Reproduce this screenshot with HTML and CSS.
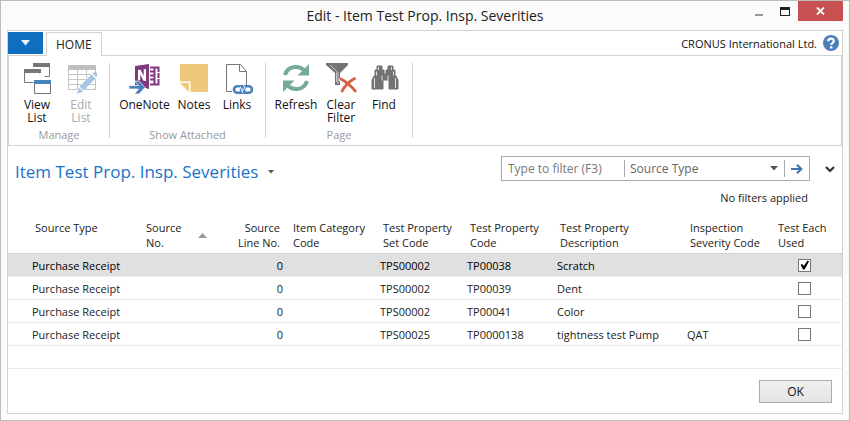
FILE: index.html
```html
<!DOCTYPE html>
<html lang="en">
<head>
<meta charset="utf-8">
<title>Edit - Item Test Prop. Insp. Severities</title>
<link rel="stylesheet" href="styles.css">
</head>
<body>
<div class="window">
  <header class="titlebar">
    <div class="window-title">Edit - Item Test Prop. Insp. Severities</div>
    <div class="window-controls">
      <button class="window-button" aria-label="Minimize"><svg width="11" height="11" viewBox="0 0 11 11"><path d="M1 8h8v2H1z" fill="#999"/></svg></button>
      <button class="window-button" aria-label="Maximize"><svg width="11" height="11" viewBox="0 0 11 11"><path d="M0 1h10v9H0zM1 4v5h8V4z" fill="#222" fill-rule="evenodd"/></svg></button>
      <button class="window-button close" aria-label="Close"><svg width="9" height="8" viewBox="0 0 9 8"><path d="M1 .5l7 7M8 .5l-7 7" stroke="#fff" stroke-width="1.8"/></svg></button>
    </div>
  </header>

  <main class="frame">
    <nav class="tabs">
      <button class="app-menu" aria-label="Application menu"><svg width="9" height="6" viewBox="0 0 9 6"><path d="M0 0h9L4.500 5.500z" fill="#e8f2fb"/></svg></button>
      <button class="tab">HOME</button>
      <span class="company">CRONUS International Ltd.</span>
      <button class="help" aria-label="Help"><svg width="16" height="16" viewBox="0 0 16 16"><circle cx="8" cy="8" r="8" fill="#4a7fb8"/><path d="M5.200 6.200C5.200 2.700 10.800 2.800 10.800 5.900C10.800 7.800 8.200 7.800 8.200 10" fill="none" stroke="#fff" stroke-width="2.200"/><path d="M7 11.200h2.400v2.300H7z" fill="#fff"/></svg></button>
    </nav>

    <section class="ribbon">
      <div class="group">
        <div class="actions">
          <button class="action"><svg width="32" height="32" viewBox="0 0 32 32"><g fill="none" stroke="#777"><path d="M12.500 4V1.500h16v12h-5M3.500 8v11.500h9M18.500 10.500V8"/></g><path d="M12 0h17v4H12zM3 6h17v4H3z" fill="#777"/><path d="M13.500 18v12.500h16V18" fill="#fff" stroke="#777"/><path d="M13 17h17v4H13z" fill="#4682bd"/></svg><span>View<br>List</span></button>
          <button class="action" disabled><svg width="32" height="32" viewBox="0 0 32 32"><path d="M3.500 5v21.500h27V5M3 11.500h28M3 16.500h28M3 21.500h28M12.500 7v19M21.500 7v19" fill="none" stroke="#c4c4c4"/><path d="M3 2h28v5H3z" fill="#bfbfbf"/><path d="M11 32l2.500-8L28 9.500l4.500 4.500L18 28.500z" fill="#fff"/><path d="M12 31l2-6.500 4 4zM14.500 23.500l12-12 4 4-12 12zM27.500 10.500l1-1q2-1 3.200.3t.3 3.200l-.8 1z" fill="#a6c4e3"/></svg><span>Edit<br>List</span></button>
        </div>
        <div class="group-label">Manage</div>
      </div>
      <div class="separator"></div>
      <div class="group">
        <div class="actions">
          <button class="action wide"><svg width="32" height="32" viewBox="0 0 32 32"><path d="M6 3l14-2v25L6 22z" fill="#80397b"/><path d="M9 17V7l2.500-.3 3.200 6.300V6.200l2.300-.3v12l-2.500-.2-3.200-6.200v5.700z" fill="#fff"/><path d="M21 4.500h8.500v17H21M21 8.500h5M21 12.500h5M21 16.500h5M25.500 4v17" fill="none" stroke="#80397b" stroke-width="2"/><path d="M27 9.500h4M27 15.500h4" stroke="#fff"/><path d="M0 22.500h9.500l-4-4.500H10l6 6.500-6 6.500H5.500l4-5H0z" fill="#4682bd" stroke="#fff" stroke-width=".7"/></svg><span>OneNote</span></button>
          <button class="action narrow"><svg width="32" height="32" viewBox="0 0 32 32"><path d="M2 1h28v28H12.500V18.500H2z" fill="#efc77d"/><path d="M2 20h9v9z" fill="#efc77d"/></svg><span>Notes</span></button>
          <button class="action"><svg width="32" height="32" viewBox="0 0 32 32"><path d="M11 28.500H5.500v-27h14l6 7V22M18.500 1.500V8.500h7" fill="none" stroke="#777"/><g fill="none" stroke="#4682bd" stroke-width="2.600"><rect x="13" y="23.300" width="11" height="6.500" rx="3.250"/><rect x="20" y="23.300" width="11" height="6.500" rx="3.250"/></g><path d="M19 23.500l3 6.500M22.500 22l2.500 6" stroke="#fff"/></svg><span>Links</span></button>
        </div>
        <div class="group-label">Show Attached</div>
      </div>
      <div class="separator"></div>
      <div class="group">
        <div class="actions">
          <button class="action mid"><svg width="32" height="32" viewBox="0 0 32 32"><g fill="none" stroke="#75ab97" stroke-width="4"><path d="M5 12C8 2 20 2 25 8.500"/><path d="M27 18C24 28 12 28 7 21.500"/></g><path d="M29 1v11.500H17.500zM3 29V17.500h11.500z" fill="#75ab97"/></svg><span>Refresh</span></button>
          <button class="action narrow"><svg width="32" height="32" viewBox="0 0 32 32"><path d="M1 0h22v2l-8 8v12h-5V10L1 2z" fill="#737373"/><path d="M11.500 9.500v9l1.500 2v-11L5 2" fill="none" stroke="#ddd" stroke-width=".8"/><path d="M14.500 15.500Q24 20 31 29M29.500 15Q20 20 16.500 29" fill="none" stroke="#fff" stroke-width="4.500"/><path d="M15 15.500Q24 20 31 29M30.500 15Q21 20 16.500 29" fill="none" stroke="#d95f43" stroke-width="2.800"/></svg><span>Clear<br>Filter</span></button>
          <button class="action"><svg width="32" height="32" viewBox="0 0 32 32"><path d="M9 3h5v4h2v4h2V7h2V3h5v4h2v6h1l2 4v9h-9v-9h-6v9H4v-9l2-4h1V7h2z" fill="#737373" stroke="#737373"/><path d="M10.500 4v3M8.500 8.500v4M6.500 15v10M23.500 4v3M25.500 8.500v4M27.500 15v10M14 12.500v5M20 12.500v5" stroke="#fff" stroke-width=".8"/></svg><span>Find</span></button>
        </div>
        <div class="group-label">Page</div>
      </div>
      <div class="separator"></div>
    </section>

    <section class="page-head">
      <h1><a href="#">Item Test Prop. Insp. Severities</a><svg width="7" height="4" viewBox="0 0 7 4"><path d="M0 0h6L3 3.500z" fill="#555"/></svg></h1>
      <div class="filter-area">
        <form class="filter">
          <input type="text" placeholder="Type to filter (F3)" aria-label="Type to filter">
          <div class="field">
            <select aria-label="Filter field"><option>Source Type</option></select>
            <svg width="8" height="5" viewBox="0 0 8 5"><path d="M0 0h8L4 4.500z" fill="#555"/></svg>
          </div>
          <button type="button" aria-label="Apply filter"><svg width="12" height="10" viewBox="0 0 12 10"><path d="M0 5h10M6 .8L10.200 5L6 9.200" fill="none" stroke="#4077b3" stroke-width="2.200"/></svg></button>
        </form>
        <div class="filter-status">No filters applied</div>
      </div>
      <button class="expand" aria-label="Expand filters"><svg width="10" height="7" viewBox="0 0 10 7"><path d="M1 1l4 4 4-4" fill="none" stroke="#333" stroke-width="2.200"/></svg></button>
    </section>

    <table class="list">
      <colgroup><col class="c-type"><col class="c-no"><col class="c-line"><col class="c-cat"><col class="c-set"><col class="c-code"><col class="c-desc"><col class="c-sev"><col class="c-each"></colgroup>
      <thead>
        <tr>
          <th>Source Type</th>
          <th><div class="sorted"><span>Source<br>No.</span><svg width="9" height="5" viewBox="0 0 9 5"><path d="M0 5h9L4.500 0z" fill="#999"/></svg></div></th>
          <th class="num">Source<br>Line No.</th>
          <th>Item Category<br>Code</th>
          <th>Test Property<br>Set Code</th>
          <th>Test Property<br>Code</th>
          <th>Test Property<br>Description</th>
          <th>Inspection<br>Severity Code</th>
          <th>Test Each<br>Used</th>
        </tr>
      </thead>
      <tbody>
        <tr class="selected"><td>Purchase Receipt</td><td></td><td class="num">0</td><td></td><td>TPS00002</td><td>TP00038</td><td>Scratch</td><td></td><td class="check"><input type="checkbox" aria-label="Test each used, TP00038" checked></td></tr>
        <tr><td>Purchase Receipt</td><td></td><td class="num">0</td><td></td><td>TPS00002</td><td>TP00039</td><td>Dent</td><td></td><td class="check"><input type="checkbox" aria-label="Test each used, TP00039"></td></tr>
        <tr><td>Purchase Receipt</td><td></td><td class="num">0</td><td></td><td>TPS00002</td><td>TP00041</td><td>Color</td><td></td><td class="check"><input type="checkbox" aria-label="Test each used, TP00041"></td></tr>
        <tr><td>Purchase Receipt</td><td></td><td class="num">0</td><td></td><td>TPS00025</td><td>TP0000138</td><td>tightness test Pump</td><td>QAT</td><td class="check"><input type="checkbox" aria-label="Test each used, TP0000138"></td></tr>
        <tr><td></td><td></td><td></td><td></td><td></td><td></td><td></td><td></td><td></td></tr>
      </tbody>
    </table>

    <footer class="footer"><button class="ok">OK</button></footer>
  </main>
</div>
</body>
</html>
```
FILE: styles.css
```css
* { box-sizing: border-box; }

body {
  margin: 0;
  background: #fbfbfb;
  color: #222;
  font: 11px/15px "Open Sans", "Noto Sans", sans-serif;
}

button, input, select {
  margin: 0;
  padding: 0;
  border: 0;
  background: none;
  color: inherit;
  font: inherit;
}

svg { display: block; flex: none; }

.window {
  display: flex;
  flex-direction: column;
  min-height: 100vh;
  padding: 0 6px 6px;
  border: 1px solid #bcbcbc;
}

.titlebar {
  display: grid;
  grid-template-columns: 1fr auto 1fr;
  height: 29px;
}

.window-title {
  grid-column: 2;
  font-size: 14px;
  line-height: 29px;
}

.window-controls {
  display: flex;
  justify-content: flex-end;
}

.window-button {
  display: flex;
  align-items: center;
  justify-content: center;
  width: 26px;
  height: 20px;
}

.window-button.close { width: 45px; background: #c75050; }

.frame {
  display: flex;
  flex: 1;
  flex-direction: column;
  border: 1px solid #d2d2d2;
  background: #fff;
}

.tabs {
  display: flex;
  align-items: center;
  height: 24px;
  padding-right: 3px;
}

.app-menu {
  display: flex;
  align-items: center;
  justify-content: center;
  width: 35px;
  height: 22px;
  background: #106ebe;
}

.tab {
  align-self: flex-end;
  z-index: 1;
  height: 24px;
  margin: 0 auto -1px 3px;
  padding: 0 9px;
  border: 1px solid #d2d2d2;
  border-bottom: 0;
  background: #fff;
  font-size: 12px;
}

.company { margin-right: 6px; color: #111; }

.ribbon {
  display: flex;
  height: 91px;
  padding-top: 7px;
  border: 1px solid #d2d2d2;
}

.group {
  display: flex;
  flex-direction: column;
  padding: 0 6px;
}

.actions { display: flex; height: 64px; }

.action {
  display: flex;
  flex-direction: column;
  align-items: center;
  gap: 3px;
  width: 44px;
  color: #111;
  font-size: 12px;
  line-height: 13px;
}

.action.wide { width: 57px; }
.action.mid { width: 48px; }
.action.narrow { width: 42px; }
.action:disabled { color: #aaa; }

.group-label {
  color: #999;
  line-height: 15px;
  text-align: center;
}

.separator {
  width: 1px;
  height: 75px;
  background: #d2d2d2;
}

.page-head {
  display: flex;
  align-items: flex-start;
  height: 72px;
  padding: 10px 7px 0;
}

h1 {
  display: flex;
  align-items: center;
  gap: 10px;
  margin: 0 auto 0 0;
  font-size: 17px;
  font-weight: 400;
  line-height: 31px;
}

h1 a { color: #1a72c8; text-decoration: none; }

.filter {
  display: flex;
  align-items: center;
  width: 309px;
  height: 25px;
  border: 1px solid #aaa;
}

.filter input { width: 122px; padding-left: 6px; font-size: 12px; }
.filter input::placeholder { color: #777; opacity: 1; }

.field {
  display: flex;
  flex: 1;
  align-items: center;
  height: 17px;
  padding: 0 6px 0 5px;
  border: solid #aaa;
  border-width: 0 1px;
}

.field select { flex: 1; appearance: none; color: #666; font-size: 12px; }

.filter button { display: flex; justify-content: center; width: 24px; }

.filter-status {
  margin: 9px 2px 0;
  text-align: right;
}

.expand { margin: 10px 0 0 15px; }

.list {
  width: 100%;
  border-collapse: collapse;
  table-layout: fixed;
}

.c-type { width: 131px; }
.c-no { width: 77px; }
.c-line { width: 70px; }
.c-cat { width: 90px; }
.c-set { width: 87px; }
.c-code { width: 90px; }
.c-sev { width: 88px; }
.c-each { width: 71px; }

th {
  height: 35px;
  padding: 2px 0 3px 7px;
  border-bottom: 1px solid #d2d2d2;
  font-weight: 400;
  text-align: left;
  vertical-align: top;
  white-space: nowrap;
}

td {
  height: 23px;
  padding: 0 0 0 4px;
  border-bottom: 1px solid #ececec;
  white-space: nowrap;
}

th:first-child { padding-left: 27px; }
td:first-child { padding-left: 24px; }
th.num { padding-right: 6px; text-align: right; }
td.num { padding-right: 3px; text-align: right; }

.sorted { display: flex; align-items: center; justify-content: space-between; padding-right: 9px; }

.selected td { background: #e0e0e0; color: #000; }

.check { padding: 0 4px 0 0; text-align: center; }

.check input {
  display: block;
  width: 13px;
  height: 13px;
  margin: 0 auto;
  border: 1px solid #777;
  background: #fff;
  appearance: none;
}

.check input:checked::before {
  display: block;
  height: 11px;
  background: #000;
  clip-path: polygon(15% 48%, 30% 42%, 44% 60%, 76% 12%, 92% 16%, 50% 90%, 36% 90%);
  content: "";
}

.footer {
  display: flex;
  justify-content: flex-end;
  margin-top: auto;
  padding: 10px;
}

.ok {
  width: 73px;
  height: 23px;
  border: 1px solid #acacac;
  background: linear-gradient(#f0f0f0, #e4e4e4);
  color: #111;
  font-size: 12px;
}
```
